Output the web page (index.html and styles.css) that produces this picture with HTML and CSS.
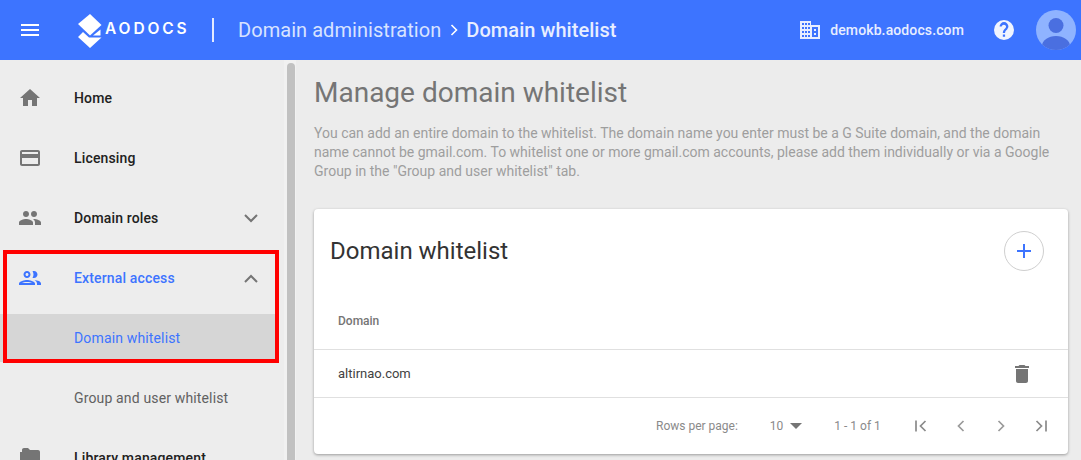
FILE: index.html
```html
<!DOCTYPE html>
<html lang="en">
<head>
<meta charset="utf-8">
<title>Domain whitelist</title>
<link rel="stylesheet" href="styles.css">
</head>
<body>
<header class="topbar">
  <svg class="menu-icon" width="18" height="12" viewBox="0 0 18 12"><path d="M0 0h18v2H0zM0 5h18v2H0zM0 10h18v2H0z" fill="#fff"/></svg>
  <svg class="logo-mark" width="24" height="34" viewBox="0 0 24 34"><path d="M12 0l11.500 11L12 21.500 0 10z" fill="#fff"/><path d="M15 21.500l7.500-6v6z" fill="#fff"/><path d="M0 23l5-5 6 5.500h12.500L12 34z" fill="#fff"/></svg>
  <span class="logo-text">AODOCS</span>
  <span class="divider"></span>
  <span class="crumb">Domain administration</span>
  <svg class="crumb-sep" width="9" height="12" viewBox="0 0 9 12"><path d="M1.500 1l5 5-5 5" fill="none" stroke="#fff" stroke-width="1.600"/></svg>
  <span class="crumb-current">Domain whitelist</span>
  <svg class="building" width="20" height="18" viewBox="0 0 20 18"><path fill="#e8eeff" fill-rule="evenodd" d="M0 0h11v4h9v14H0zM2 2v2h2V2zm3 0v2h2V2zm3 0v2h2V2zM2 6v2h2V6zm3 0v2h2V6zm3 0v2h2V6zM2 10v2h2v-2zm3 0v2h2v-2zm3 0v2h2v-2zM2 14v2h2v-2zm3 0v2h2v-2zm3 0v2h2v-2zM12 6v10h6V6zm2 2h2v2h-2zm0 4h2v2h-2z"/></svg>
  <span class="domain">demokb.aodocs.com</span>
  <svg class="help" width="20" height="20" viewBox="0 0 24 24"><path fill="#f0f4ff" d="M12 0a12 12 0 1 0 0 24 12 12 0 0 0 0-24zm1.300 20h-2.700v-2.700h2.700zm2.700-8.900-1.200 1.200c-1 1-1.500 1.700-1.500 3.400h-2.700v-.7c0-1.400.5-2.700 1.500-3.700l1.700-1.700c.5-.5.700-1.100.7-1.800a2.700 2.700 0 0 0-5.300 0H6.700a5.300 5.300 0 0 1 10.600 0c0 1.200-.5 2.200-1.300 3z"/></svg>
  <svg class="avatar" width="40" height="40" viewBox="0 0 40 40"><defs><clipPath id="av"><circle cx="20" cy="20" r="20"/></clipPath></defs><g clip-path="url(#av)"><rect width="40" height="40" fill="#8fb3ff"/><circle cx="20" cy="15.500" r="7.500" fill="#4a6fe0"/><ellipse cx="20" cy="36" rx="14" ry="10" fill="#4a6fe0"/></g></svg>
</header>
<div class="layout">
  <nav class="sidebar">
    <a class="nav-item">
      <svg class="nav-icon" width="24" height="24" viewBox="0 0 24 24"><path fill="#757575" d="M10 20v-6h4v6h5v-8h3L12 3 2 12h3v8z"/></svg>
      <span class="nav-label">Home</span>
    </a>
    <a class="nav-item">
      <svg class="nav-icon" width="24" height="24" viewBox="0 0 24 24"><path fill="#757575" d="M20 4H4c-1.100 0-2 .9-2 2v12c0 1.100.9 2 2 2h16c1.100 0 2-.9 2-2V6c0-1.100-.9-2-2-2zm0 14H4v-6h16zm0-10H4V6h16z"/></svg>
      <span class="nav-label">Licensing</span>
    </a>
    <a class="nav-item">
      <svg class="nav-icon" width="24" height="24" viewBox="0 0 24 24"><path fill="#757575" d="M16 11c1.700 0 3-1.300 3-3s-1.300-3-3-3-3 1.300-3 3 1.300 3 3 3zm-8 0c1.700 0 3-1.300 3-3S9.700 5 8 5 5 6.300 5 8s1.300 3 3 3zm0 2c-2.300 0-7 1.200-7 3.500V19h14v-2.500C15 14.200 10.300 13 8 13zm8 0h-1c1.200.8 2 2 2 3.500V19h6v-2.500c0-2.300-4.700-3.500-7-3.500z"/></svg>
      <span class="nav-label">Domain roles</span>
      <svg class="chevron" width="14" height="9" viewBox="0 0 14 9"><path d="M1 1l6 6 6-6" fill="none" stroke="#757575" stroke-width="2"/></svg>
    </a>
    <a class="nav-item active">
      <svg class="nav-icon" width="24" height="24" viewBox="0 0 24 24"><path fill="#3d74ff" d="M9 12c1.900 0 3.500-1.600 3.500-3.500S10.900 5 9 5 5.500 6.600 5.500 8.500 7.100 12 9 12zm0-5c.8 0 1.500.7 1.500 1.500S9.800 10 9 10s-1.500-.7-1.500-1.500S8.200 7 9 7zm0 7c-2.300 0-8 1.200-8 3.500V19h16v-1.500c0-2.300-5.700-3.500-8-3.500zm-5.300 3c.9-.5 3.400-1 5.300-1s4.400.5 5.300 1zM16 12c1.900 0 3.500-1.600 3.500-3.500S17.900 5 16 5c-.5 0-1 .1-1.500.3.6.9 1 2 1 3.200s-.4 2.300-1 3.200c.5.200 1 .3 1.500.3zm.5 2c1.300.9 2.500 2.200 2.500 3.500V19h4v-1.500c0-2-3.500-3.200-6.500-3.500z"/></svg>
      <span class="nav-label">External access</span>
      <svg class="chevron" width="14" height="9" viewBox="0 0 14 9"><path d="M1 8l6-6 6 6" fill="none" stroke="#757575" stroke-width="2"/></svg>
    </a>
    <a class="sub-item current">Domain whitelist</a>
    <a class="sub-item">Group and user whitelist</a>
    <a class="nav-item">
      <svg class="nav-icon" width="24" height="24" viewBox="0 0 24 24"><path fill="#757575" d="M4 6H2v14c0 1.100.9 2 2 2h14v-2H4zm16-2h-8l-2-2H6c-1.100 0-2 .9-2 2v12c0 1.100.9 2 2 2h14c1.100 0 2-.9 2-2V6c0-1.100-.9-2-2-2z"/></svg>
      <span class="nav-label">Library management</span>
    </a>
  </nav>
  <div class="scrolltrack"><div class="scrollthumb"></div></div>
  <main class="content">
    <h1 class="page-title">Manage domain whitelist</h1>
    <p class="intro">You can add an entire domain to the whitelist. The domain name you enter must be a G Suite domain, and the domain name cannot be gmail.com. To whitelist one or more gmail.com accounts, please add them individually or via a Google Group in the "Group and user whitelist" tab.</p>
    <section class="card">
      <div class="card-head">
        <h2 class="card-title">Domain whitelist</h2>
        <span class="add-btn"><svg width="14" height="14" viewBox="0 0 14 14"><path d="M6 0h2v6h6v2H8v6H6V8H0V6h6z" fill="#3d74ff"/></svg></span>
      </div>
      <div class="col-head">Domain</div>
      <div class="row">
        <span>altirnao.com</span>
        <svg width="24" height="24" viewBox="0 0 24 24"><path fill="#757575" d="M6 19c0 1.100.9 2 2 2h8c1.100 0 2-.9 2-2V7H6zM19 4h-3.500l-1-1h-5l-1 1H5v2h14z"/></svg>
      </div>
      <div class="pager">
        <span class="pager-label">Rows per page:</span>
        <span class="pager-size">10</span>
        <span class="caret"></span>
        <span class="pager-range">1 - 1 of 1</span>
        <span class="pager-nav">
          <svg width="14" height="14" viewBox="0 0 14 14"><path d="M2 1.500v11M11.500 2l-5 5 5 5" fill="none" stroke="#8a8a8a" stroke-width="1.700"/></svg>
          <svg width="14" height="14" viewBox="0 0 14 14"><path d="M9.500 2l-5 5 5 5" fill="none" stroke="#9a9a9a" stroke-width="1.700"/></svg>
          <svg width="14" height="14" viewBox="0 0 14 14"><path d="M4.500 2l5 5-5 5" fill="none" stroke="#9a9a9a" stroke-width="1.700"/></svg>
          <svg width="14" height="14" viewBox="0 0 14 14"><path d="M12 1.500v11M2.500 2l5 5-5 5" fill="none" stroke="#8a8a8a" stroke-width="1.700"/></svg>
        </span>
      </div>
    </section>
  </main>
</div>
<div class="highlight-box"></div>
</body>
</html>
```
FILE: styles.css
```css
* { box-sizing: border-box; }
html, body { height: 100%; }
body {
  margin: 0;
  height: 460px;
  overflow: hidden;
  background: #ececec;
  font-family: Roboto, "Liberation Sans", sans-serif;
  color: #212121;
}
.topbar {
  height: 60px;
  background: #3d74ff;
  display: flex;
  align-items: center;
  color: #fff;
  padding-left: 21px;
}
.menu-icon { flex: none; }
.logo-mark { flex: none; margin-left: 39px; margin-top: 1px; }
.logo-text {
  margin-left: 3px;
  font-family: Inter, Roboto, sans-serif;
  font-size: 15.500px;
  font-weight: 600;
  letter-spacing: 2.900px;
  width: 98px;
  margin-bottom: 3px;
}
.divider { width: 2px; height: 24px; background: #e3eaff; margin-left: 9px; }
.crumb { margin-left: 24px; font-size: 20px; letter-spacing: .05px; color: #d8e3ff; }
.crumb-sep { margin-left: 9px; }
.crumb-current { margin-left: 7px; font-size: 20px; font-weight: 500; letter-spacing: .05px; color: #e8eeff; }
.building { margin-left: auto; }
.domain { margin-left: 10px; font-size: 14px; font-weight: 500; letter-spacing: .12px; color: #e8eeff; }
.help { margin-left: 30px; }
.avatar { margin-left: 22px; margin-right: 5px; }

.layout { display: flex; height: 400px; }
.sidebar {
  width: 284px;
  flex: none;
  display: flex;
  flex-direction: column;
  padding-top: 8px;
  background: #ededed;
  overflow: hidden;
}
.scrolltrack { width: 12px; flex: none; background: #f1f1f1; padding: 3px 1px 0 3px; }
.scrollthumb { height: 100%; background: #c1c1c1; border-radius: 4px 4px 0 0; }
.nav-item {
  height: 60px;
  flex: none;
  display: flex;
  align-items: center;
  padding-left: 18px;
  font-size: 14px;
  font-weight: 500;
  letter-spacing: .15px;
}
.nav-icon { flex: none; }
.nav-label { margin-left: 32px; flex: 1; }
.chevron { margin-right: 26px; }
.active .nav-label { color: #3d74ff; }
.sub-item {
  display: flex;
  align-items: center;
  flex: none;
  height: 48px;
  margin: 6px 0;
  padding-left: 74px;
  font-size: 14px;
  letter-spacing: .15px;
  color: #616161;
}
.current { background: #d6d6d6; color: #3d74ff; margin-right: 6px; }

.content { flex: 1; padding: 0 13px 0 18px; min-width: 0; }
.page-title {
  margin: 15px 0 0;
  font-size: 28px;
  font-weight: 400;
  line-height: 36px;
  color: #757575;
}
.intro {
  margin: 13px 0 0;
  font-size: 14px;
  line-height: 19px;
  color: #9e9e9e;
}
.card {
  margin-top: 28px;
  background: #fff;
  border-radius: 4px;
  box-shadow: 0 1px 3px rgba(0,0,0,.35);
  height: 245px;
}
.card-head {
  height: 84px;
  display: flex;
  align-items: center;
  justify-content: space-between;
  padding: 0 24px 0 16px;
}
.card-title { margin: 0; font-size: 24px; font-weight: 400; color: #333; }
.add-btn {
  width: 40px;
  height: 40px;
  border: 1px solid #cfcfcf;
  border-radius: 50%;
  display: flex;
  align-items: center;
  justify-content: center;
}
.col-head {
  height: 57px;
  display: flex;
  align-items: center;
  padding-left: 24px;
  font-size: 12px;
  font-weight: 500;
  color: #757575;
  border-bottom: 1px solid #e0e0e0;
}
.row {
  height: 48px;
  display: flex;
  align-items: center;
  justify-content: space-between;
  padding: 0 34px 0 24px;
  font-size: 13px;
  color: #424242;
  border-bottom: 1px solid #e0e0e0;
}
.pager {
  height: 56px;
  display: flex;
  align-items: center;
  font-size: 12px;
  color: #8a8a8a;
  padding-left: 342px;
}
.pager-size { margin-left: 32px; }
.caret {
  margin-left: 7px;
  border-left: 6px solid transparent;
  border-right: 6px solid transparent;
  border-top: 6px solid #757575;
}
.pager-range { margin-left: 32px; }
.pager-nav { margin-left: 33px; display: flex; gap: 26px; }

.highlight-box {
  position: absolute;
  left: 3px;
  top: 250px;
  width: 276px;
  height: 113px;
  border: 4px solid #f00;
}
```
